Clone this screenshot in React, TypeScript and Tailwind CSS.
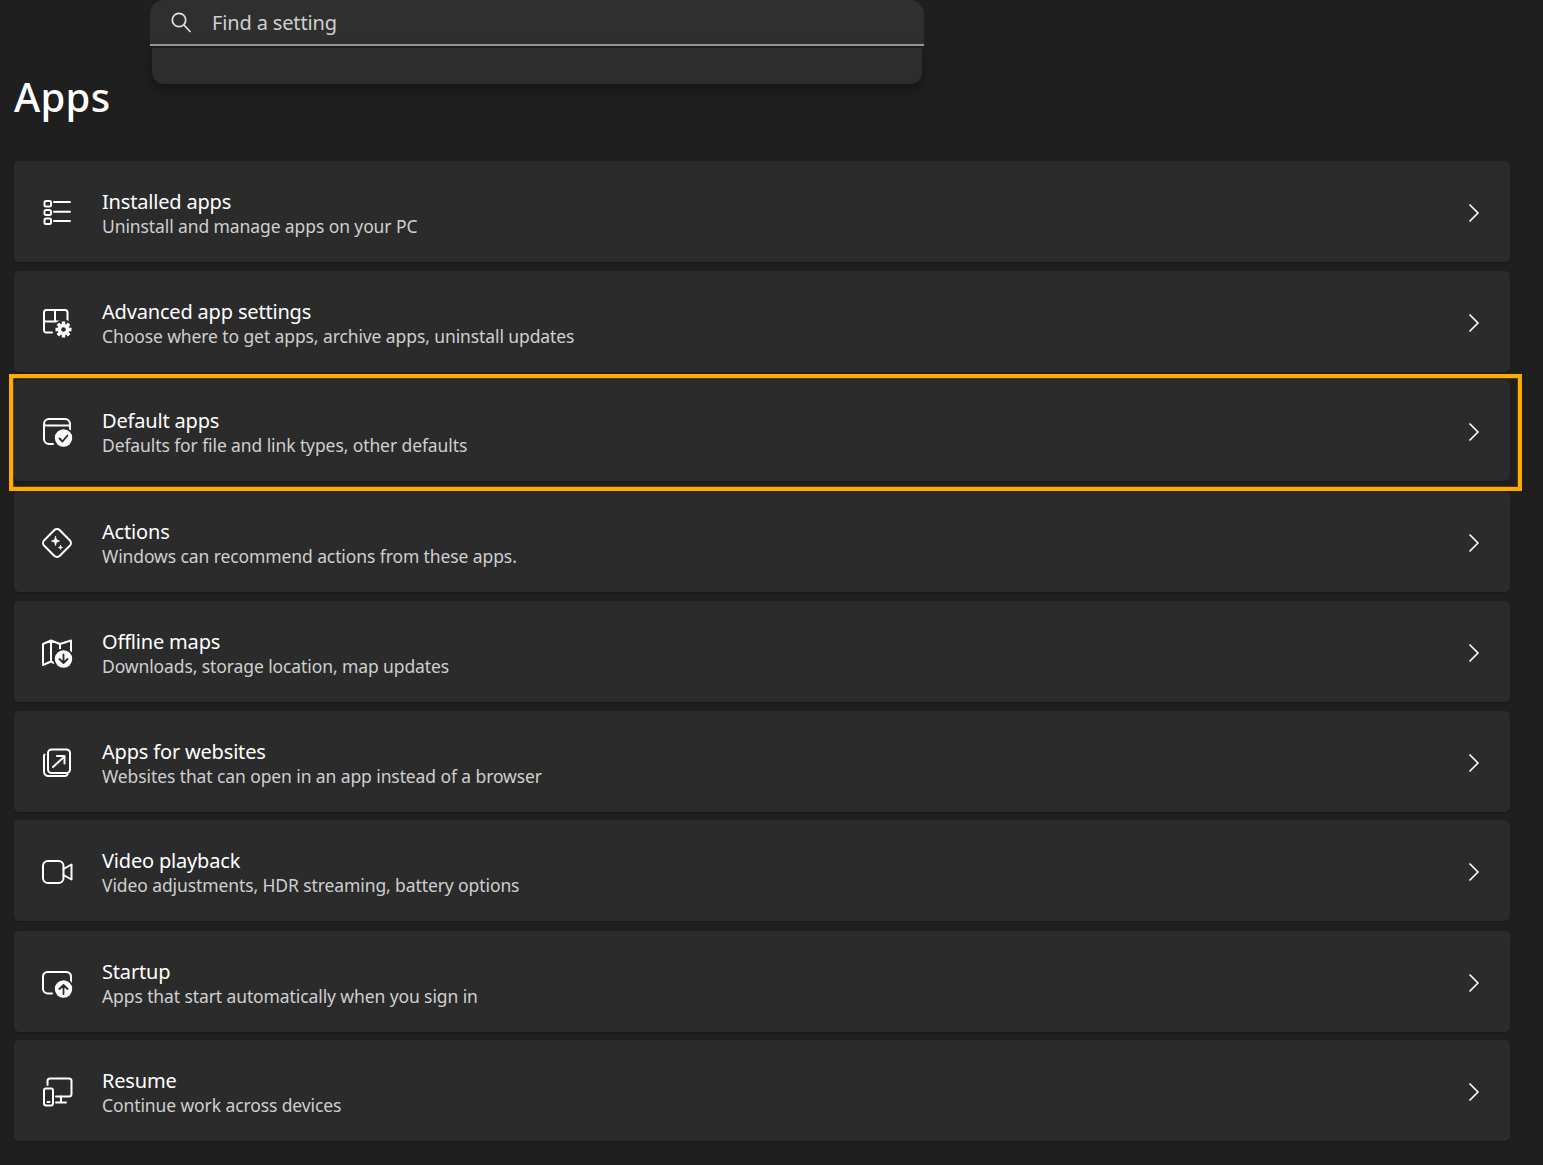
import type { ReactNode } from 'react'

const ic = {
  fill: 'none',
  stroke: 'currentColor',
  strokeWidth: 2,
  strokeLinecap: 'round' as const,
  strokeLinejoin: 'round' as const,
}

function Glyph({ children }: { children: ReactNode }) {
  return (
    <svg width="34" height="34" viewBox="0 0 34 34" className="text-white" {...ic}>
      {children}
    </svg>
  )
}

function Badge({ children }: { children: ReactNode }) {
  return (
    <>
      <circle cx="23.500" cy="23" r="10.500" fill="#2b2b2b" stroke="none" />
      <circle cx="23.500" cy="23" r="8.700" fill="#ffffff" stroke="none" />
      <g stroke="#2b2b2b" strokeWidth="1.800">{children}</g>
    </>
  )
}

const icons: Record<string, ReactNode> = {
  installed: (
    <Glyph>
      <rect x="4.500" y="5" width="6.500" height="5.500" rx="1.500" />
      <rect x="4.500" y="14" width="6.500" height="5" rx="1.500" />
      <rect x="4.500" y="22.500" width="6.500" height="5.500" rx="1.500" />
      <path d="M14 6h16M14 15.700h16M14 25h16" />
    </Glyph>
  ),
  advanced: (
    <Glyph>
      <path d="M12 26.500H6.500a2.500 2.500 0 0 1-2.500-2.500V6.500A2.500 2.500 0 0 1 6.500 4H25a2.500 2.500 0 0 1 2.500 2.500V16" />
      <path d="M15 4v11.500M4 15.500h22" />
      <circle cx="23.500" cy="23.500" r="10" fill="#2b2b2b" stroke="none" />
      <g stroke="#ffffff" strokeWidth="3.400" strokeLinecap="butt">
        <path d="M23.500 15.500v16M15.500 23.500h16M17.800 17.800l11.400 11.400M29.200 17.800 17.800 29.200" />
      </g>
      <circle cx="23.500" cy="23.500" r="5.800" fill="#ffffff" stroke="none" />
      <circle cx="23.500" cy="23.500" r="2.300" fill="#2b2b2b" stroke="none" />
    </Glyph>
  ),
  defaults: (
    <Glyph>
      <path d="M13 29H9a5 5 0 0 1-5-5V9a5 5 0 0 1 5-5h16a5 5 0 0 1 5 5v7" />
      <path d="M4 10.500h26" />
      <Badge>
        <path d="m19.500 23.500 3 3 5-6" />
      </Badge>
    </Glyph>
  ),
  actions: (
    <Glyph>
      <rect x="6" y="6" width="22" height="22" rx="4" transform="rotate(45 17 17)" />
      <path
        d="M15.500 10.500c.5 3 1.500 4 4 4.500-2.500.5-3.500 1.500-4 4.500-.5-3-1.500-4-4-4.500 2.500-.5 3.500-1.500 4-4.500Z"
        fill="#ffffff"
        strokeWidth="0.800"
      />
      <path
        d="M20.500 19.500c.2 1.300.7 1.800 2 2-1.300.2-1.800.7-2 2-.2-1.300-.7-1.800-2-2 1.300-.2 1.800-.7 2-2Z"
        fill="#ffffff"
        strokeWidth="0.800"
      />
    </Glyph>
  ),
  maps: (
    <Glyph>
      <path d="M3 8v21l8-3.500V4.500L3 8ZM11 4.500l9 3.500 11-3.500v11M11 25.500l3 1.500M20 8v8" />
      <Badge>
        <path d="M23.500 18.500v8.500M19.500 23l4 4 4-4" />
      </Badge>
    </Glyph>
  ),
  websites: (
    <Glyph>
      <rect x="8" y="3.500" width="22" height="23.500" rx="3.500" />
      <path d="M4.500 8.500A3.500 3.500 0 0 0 4 10v15.500a4.500 4.500 0 0 0 4.500 4.500H25a3 3 0 0 0 2.500-1.500" />
      <path d="M13 21 24.500 10.500M17 10h7.500v7.500" />
    </Glyph>
  ),
  video: (
    <Glyph>
      <rect x="3" y="6" width="20.500" height="22" rx="5" />
      <path d="m23.500 14 8-4.500v15l-8-4.500" />
    </Glyph>
  ),
  startup: (
    <Glyph>
      <path d="M12 27.500H8a5 5 0 0 1-5-5V10.500a4.500 4.500 0 0 1 4.500-4.500h19a4.500 4.500 0 0 1 4.500 4.500V17" />
      <Badge>
        <path d="M23.500 28v-9M19.500 23l4-4 4 4" />
      </Badge>
    </Glyph>
  ),
  resume: (
    <Glyph>
      <path d="M7.500 10V6a2.500 2.500 0 0 1 2.500-2.500h19a2.500 2.500 0 0 1 2.500 2.500v13a2.500 2.500 0 0 1-2.500 2.500H16" />
      <path d="M21 21.500v5.500M16 27.500h10" />
      <rect x="4" y="13.500" width="9" height="17" rx="2" />
      <path d="M7.500 27h2" />
    </Glyph>
  ),
}

const rows = [
  { id: 'installed', title: 'Installed apps', sub: 'Uninstall and manage apps on your PC', gap: 'mt-0' },
  { id: 'advanced', title: 'Advanced app settings', sub: 'Choose where to get apps, archive apps, uninstall updates', gap: 'mt-[9px]' },
  { id: 'defaults', title: 'Default apps', sub: 'Defaults for file and link types, other defaults', gap: 'mt-[8px]', marked: true },
  { id: 'actions', title: 'Actions', sub: 'Windows can recommend actions from these apps.', gap: 'mt-[10px]' },
  { id: 'maps', title: 'Offline maps', sub: 'Downloads, storage location, map updates', gap: 'mt-[9px]' },
  { id: 'websites', title: 'Apps for websites', sub: 'Websites that can open in an app instead of a browser', gap: 'mt-[9px]' },
  { id: 'video', title: 'Video playback', sub: 'Video adjustments, HDR streaming, battery options', gap: 'mt-[8px]' },
  { id: 'startup', title: 'Startup', sub: 'Apps that start automatically when you sign in', gap: 'mt-[10px]' },
  { id: 'resume', title: 'Resume', sub: 'Continue work across devices', gap: 'mt-[8px]' },
]

function SettingRow({ row }: { row: (typeof rows)[number] }) {
  return (
    <div className={`relative flex h-[101px] items-center rounded-[5px] bg-[#2b2b2b] pl-[26px] pr-[28px] shadow-[0_1px_1px_#1a1a1a] ${row.gap}`}>
      <div className="mt-[2px] flex w-[34px] shrink-0 items-center justify-center">{icons[row.id]}</div>
      <div className="ml-[28px] flex-1 pt-[3px]">
        <div className="text-[20px] leading-[26px] tracking-[-0.18px] text-white">{row.title}</div>
        <div className="text-[17.500px] leading-[23px] tracking-[-0.1px] text-[#cfcfcf]">{row.sub}</div>
      </div>
      <svg className="mt-[2px]" width="16" height="20" viewBox="0 0 16 20" fill="none" stroke="#ffffff" strokeWidth="1.700" strokeLinecap="round" strokeLinejoin="round">
        <path d="m4 2 8 8-8 8" />
      </svg>
      {row.marked && (
        <div className="pointer-events-none absolute -bottom-[10px] -left-[5px] -right-[12px] -top-[6px] border-[4px] border-[#ffab00] shadow-[inset_0_0_0_1px_#4f3f17]" />
      )}
    </div>
  )
}

export default function App() {
  return (
    <div className="relative min-h-[1165px] overflow-hidden bg-[#1f1f1f] font-['Noto_Sans','Open_Sans',sans-serif]">
      <div className="absolute left-[150px] top-0 z-10 w-[774px]">
        <div className="flex h-[46px] items-center rounded-t-[14px] border-b-[2px] border-[#9a9a9a] bg-[#2f2f2f] pl-[20px]">
          <svg width="22" height="22" viewBox="0 0 22 22" fill="none" stroke="#e4e4e4" strokeWidth="1.700" strokeLinecap="round">
            <circle cx="9" cy="9" r="6.700" />
            <path d="m14 14 6 6.500" />
          </svg>
          <span className="ml-[20px] pt-[1px] text-[20px] tracking-[-0.15px] text-[#cfcfcf]">Find a setting</span>
        </div>
        <div className="mx-[2px] h-[38px] rounded-b-[12px] border-t-[2px] border-[#1c1c1c] bg-[#2d2d2d] shadow-[0_6px_14px_rgba(0,0,0,0.35)]" />
      </div>

      <div className="pl-[14px] pr-[33px] pt-[70px]">
        <h1 className="text-[40px] font-medium leading-[54px] tracking-[0.3px] text-white">Apps</h1>
        <div className="mt-[37px] flex flex-col">
          {rows.map((row) => (
            <SettingRow key={row.id} row={row} />
          ))}
        </div>
      </div>
    </div>
  )
}
